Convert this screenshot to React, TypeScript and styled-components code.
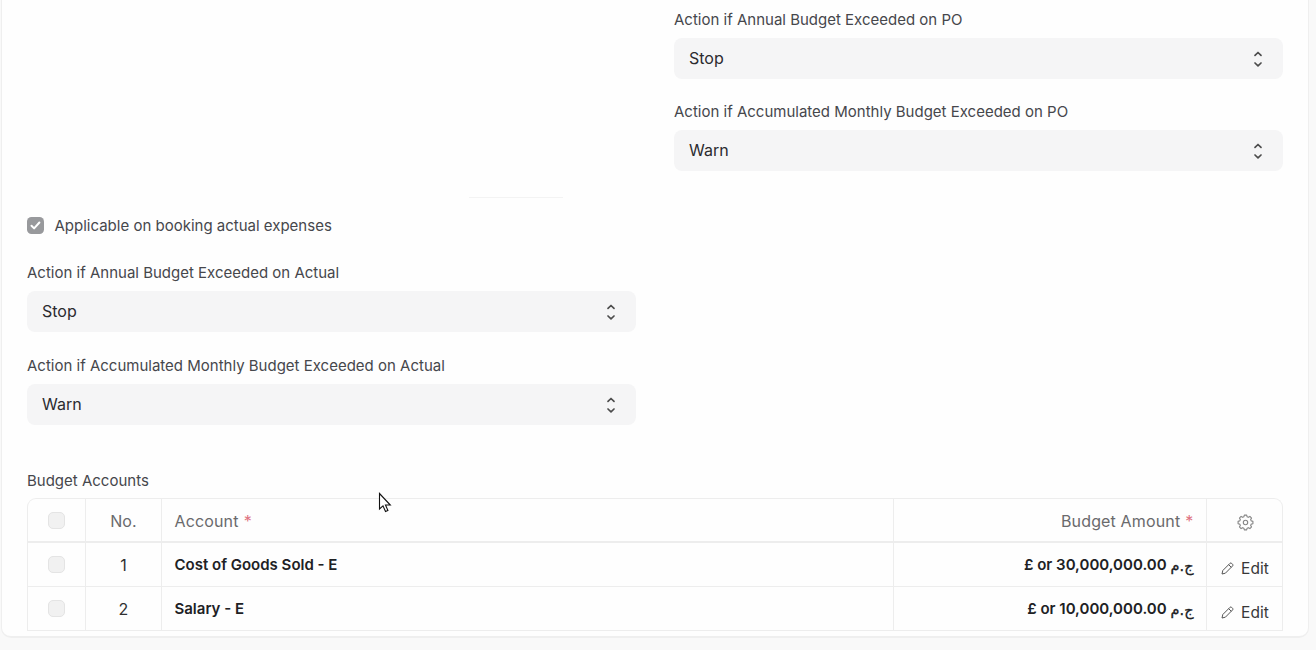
import React from "react";
import styled, { createGlobalStyle } from "styled-components";

const Global = createGlobalStyle`
  *, *::before, *::after { box-sizing: border-box; }
  body { margin: 0; background: #f9f9f9; overflow: hidden; }
  body, button { font-family: Inter, "Noto Sans", sans-serif; }
`;

const Page = styled.main`
  position: relative;
  width: 1316px;
  height: 650px;
  overflow: hidden;
  background: #f9f9f9;
  color: #383838;
`;

const Card = styled.section`
  margin-left: 1px;
  width: 1308px;
  height: 638px;
  padding: 0 25px;
  background: #fefefe;
  border: solid #efefef;
  border-width: 0 1px 2px 1px;
  border-radius: 0 0 10px 10px;
`;

const Columns = styled.div<{ $height: number }>`
  display: grid;
  grid-template-columns: 609px 609px;
  column-gap: 38px;
  height: ${(p) => p.$height}px;
`;

const Column = styled.div<{ $top: number; $gap: number }>`
  display: flex;
  flex-direction: column;
  gap: ${(p) => p.$gap}px;
  padding-top: ${(p) => p.$top}px;
`;

const Label = styled.div`
  height: 20px;
  font-size: 15px;
  line-height: 20px;
  white-space: nowrap;
  color: #46474c;
`;

const Select = styled.div`
  display: flex;
  align-items: center;
  justify-content: space-between;
  height: 41px;
  margin-top: 8px;
  padding: 0 18px 0 15px;
  border-radius: 8px;
  background: #f5f5f6;
  font-size: 16px;
  color: #2b2b2f;
`;

const Value = styled.span`
  padding-bottom: 2px;
`;

const Divider = styled.div`
  width: 94px;
  height: 1px;
  margin-left: 442px;
  background: #f3f3f3;
`;

const CheckRow = styled.div`
  display: flex;
  align-items: center;
  gap: 10.5px;
  height: 20px;
  margin-top: 18px;
`;

const Checked = styled.span`
  display: grid;
  place-items: center;
  width: 17px;
  height: 17px;
  margin-bottom: 1px;
  border-radius: 4.5px;
  background: #98999c;
`;

const Unchecked = styled.span`
  width: 17px;
  height: 17px;
  border: 1px solid #e4e4e4;
  border-radius: 5px;
  background: #f1f1f1;
`;

const Table = styled.div`
  width: 1256px;
  height: 133px;
  margin-top: 7px;
  border: 1px solid #ededed;
  border-bottom: 0;
  border-radius: 9px 9px 0 0;
`;

const Row = styled.div<{ $head?: boolean }>`
  display: grid;
  grid-template-columns: 58px 76px 732px 313px 1fr;
  height: 44px;
  border-bottom: ${(p) => (p.$head ? 2 : 1)}px solid #ededed;
  font-size: 16px;
  letter-spacing: ${(p) => (p.$head ? 0.15 : 0)}px;
  color: ${(p) => (p.$head ? "#6a6a6c" : "#303030")};
`;

const Cell = styled.div<{ $align?: string; $bold?: boolean }>`
  display: flex;
  align-items: center;
  justify-content: ${(p) => p.$align ?? "center"};
  gap: 5px;
  padding: 0 ${(p) => (p.$align ? 12.5 : 0)}px;
  border-right: 1px solid #ededed;
  white-space: nowrap;
  ${(p) => p.$bold && "font-size: 15px; font-weight: 600; letter-spacing: 0; color: #202124;"}
  &:last-child { border-right: 0; }
`;

const HeadText = styled.span`
  display: flex;
  gap: 5px;
  padding-top: 2px;
`;

const Star = styled.span`
  color: #df7482;
`;

const Currency = styled.span`
  margin-left: -1px;
  font-family: "DejaVu Sans", sans-serif;
  font-size: 14.5px;
  font-weight: 400;
  letter-spacing: 0;
  -webkit-text-stroke: 0.3px currentColor;
  transform: translateY(1px);
`;

const Edit = styled.button`
  display: flex;
  align-items: center;
  gap: 7px;
  padding: 7px 0 0 1px;
  border: 0;
  background: none;
  font-size: 15.5px;
  letter-spacing: 0.1px;
  color: #383838;
`;

const GearSlot = styled.span`
  display: flex;
  padding: 5px 0 0 1px;
`;

const Pointer = styled.svg`
  position: absolute;
  left: 378px;
  top: 492px;
`;

const Chevrons = () => (
  <svg width="14" height="18" viewBox="0 0 14 18" fill="none" stroke="#4c4c4c" strokeWidth="1.7" strokeLinecap="round" strokeLinejoin="round">
    <path d="M4 5.300 7 2.500l3 2.800M4 13l3 2.800 3-2.800" />
  </svg>
);

const Tick = () => (
  <svg width="11" height="9" viewBox="0 0 11 9" fill="none" stroke="#fff" strokeWidth="2" strokeLinecap="round" strokeLinejoin="round">
    <path d="M1.500 4.800 4.100 7.400 9.400 1.500" />
  </svg>
);

const teeth = (() => {
  const pts: string[] = [];
  for (let i = 0; i < 8; i++) {
    const at = (deg: number, r: number) => {
      const a = ((i * 45 + deg) * Math.PI) / 180;
      return `${(8.5 + r * Math.cos(a)).toFixed(2)} ${(8.5 + r * Math.sin(a)).toFixed(2)}`;
    };
    pts.push(at(-16, 5.9), at(-9, 7.5), at(9, 7.5), at(16, 5.9));
  }
  return `M${pts.join("L")}Z`;
})();

const Gear = () => (
  <svg width="17" height="17" viewBox="0 0 17 17" fill="none" stroke="#858585" strokeWidth="1.1" strokeLinejoin="round">
    <path d={teeth} />
    <circle cx="8.5" cy="8.5" r="2.2" />
  </svg>
);

const Pencil = () => (
  <svg width="13" height="13" viewBox="0 0 13 13" fill="none" stroke="#555" strokeWidth="1" strokeLinejoin="round">
    <path d="M1 12l.8-3.5L9 1.3q.8-.7 1.600 0l1 1q.8.8 0 1.600L4.400 11.200zM7.700 2.700l2.600 2.600" />
  </svg>
);

const Field = ({ label, value }: { label: string; value: string }) => (
  <div>
    <Label>{label}</Label>
    <Select>
      <Value>{value}</Value>
      <Chevrons />
    </Select>
  </div>
);

const accounts = [
  { name: "Cost of Goods Sold - E", amount: "30,000,000.00" },
  { name: "Salary - E", amount: "10,000,000.00" },
];

export default function App() {
  return (
    <Page>
      <Global />
      <Card>
        <Columns $height={197}>
          <div />
          <Column $top={10} $gap={23}>
            <Field label="Action if Annual Budget Exceeded on PO" value="Stop" />
            <Field label="Action if Accumulated Monthly Budget Exceeded on PO" value="Warn" />
          </Column>
        </Columns>
        <Divider />
        <CheckRow>
          <Checked><Tick /></Checked>
          <Label>Applicable on booking actual expenses</Label>
        </CheckRow>
        <Columns $height={235}>
          <Column $top={27} $gap={24}>
            <Field label="Action if Annual Budget Exceeded on Actual" value="Stop" />
            <Field label="Action if Accumulated Monthly Budget Exceeded on Actual" value="Warn" />
          </Column>
        </Columns>
        <Label>Budget Accounts</Label>
        <Table>
          <Row $head>
            <Cell><Unchecked /></Cell>
            <Cell><HeadText>No.</HeadText></Cell>
            <Cell $align="flex-start"><HeadText>Account <Star>*</Star></HeadText></Cell>
            <Cell $align="flex-end"><HeadText>Budget Amount <Star>*</Star></HeadText></Cell>
            <Cell><GearSlot><Gear /></GearSlot></Cell>
          </Row>
          {accounts.map((a, i) => (
            <Row key={a.name}>
              <Cell><Unchecked /></Cell>
              <Cell>{i + 1}</Cell>
              <Cell $align="flex-start" $bold>{a.name}</Cell>
              <Cell $align="flex-end" $bold>
                £ or {a.amount} <Currency dir="rtl">ج.م</Currency>
              </Cell>
              <Cell><Edit><Pencil />Edit</Edit></Cell>
            </Row>
          ))}
        </Table>
      </Card>
      <Pointer width="14" height="21" viewBox="0 0 14 21" fill="#fff" stroke="#111" strokeWidth="1.1">
        <path d="M1.500 1.500v15.500l3.500-3.200 2.500 5.700 2.400-1-2.400-5.500h4.800z" />
      </Pointer>
    </Page>
  );
}
